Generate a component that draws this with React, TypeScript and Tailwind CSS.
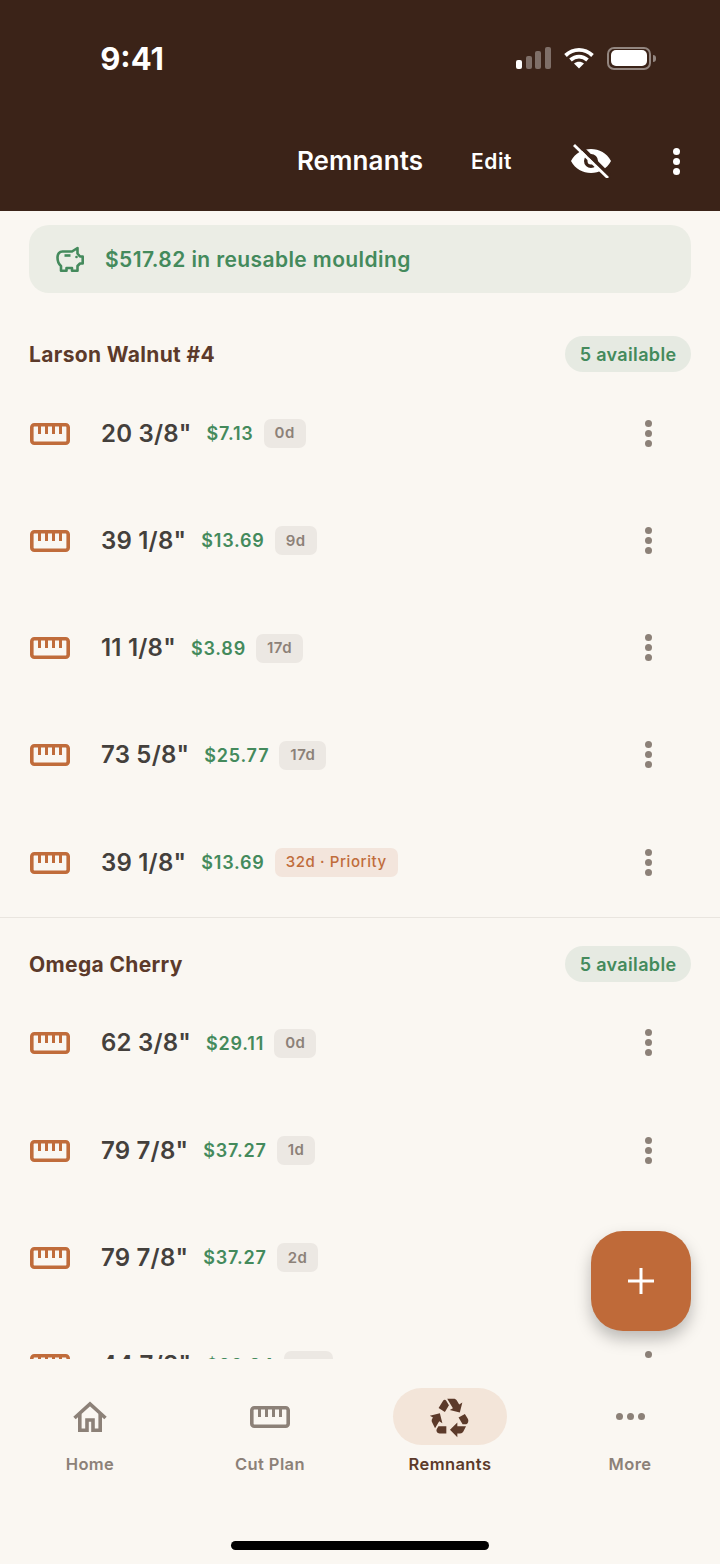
import { MdRecycling } from 'react-icons/md';

type Remnant = { size: string; price: string; age: string; priority?: boolean };

const GROUPS: { name: string; rows: Remnant[] }[] = [
  {
    name: 'Larson Walnut #4',
    rows: [
      { size: '20 3/8"', price: '$7.13', age: '0d' },
      { size: '39 1/8"', price: '$13.69', age: '9d' },
      { size: '11 1/8"', price: '$3.89', age: '17d' },
      { size: '73 5/8"', price: '$25.77', age: '17d' },
      { size: '39 1/8"', price: '$13.69', age: '32d · Priority', priority: true },
    ],
  },
  {
    name: 'Omega Cherry',
    rows: [
      { size: '62 3/8"', price: '$29.11', age: '0d' },
      { size: '79 7/8"', price: '$37.27', age: '1d' },
      { size: '79 7/8"', price: '$37.27', age: '2d' },
      { size: '44 7/8"', price: '$20.94', age: '12d' },
    ],
  },
];

function RulerIcon({ className }: { className?: string }) {
  return (
    <svg viewBox="0 0 40 22" className={className} fill="none" stroke="currentColor">
      <rect x="1.800" y="1.800" width="36.400" height="18.400" rx="2.500" strokeWidth="3.600" />
      <path d="M9.500 2v9M16.500 2v9M23.500 2v9M30.500 2v9" strokeWidth="3" />
    </svg>
  );
}

function HomeIcon({ className }: { className?: string }) {
  return (
    <svg viewBox="0 0 34 31" className={className} fill="none" stroke="currentColor" strokeWidth="3.600">
      <path d="M1.500 17 17 3l15.500 14" />
      <path d="M6.800 13v16.200h7.200V19h6v10.200h7.200V13" />
    </svg>
  );
}

function PiggyIcon({ className }: { className?: string }) {
  return (
    <svg viewBox="0 0 28 26" className={className} fill="none" stroke="currentColor" strokeWidth="2.600" strokeLinejoin="round">
      <path d="M6.500 5.500H16L21.500 2v5.500l2.500 3h2.700v7H24l-2.500 2.500v4.700h-5.500V22H10.500v2.700H5V20C2.500 18 1.500 15 1.500 11.500c0-3.500 2-6 5-6Z" />
      <path d="M8.500 9.500h6" />
      <circle cx="20.500" cy="11" r="1.300" fill="currentColor" stroke="none" />
    </svg>
  );
}

function EyeOffIcon() {
  return (
    <svg viewBox="0 0 40 34" className="h-[34px] w-[40px]">
      <path
        fillRule="evenodd"
        fill="#fff"
        d="M0 17C4 9 12 5 20 5s16 4 20 12c-4 8-12 12-20 12S4 25 0 17Zm20-7a7 7 0 1 0 0 14 7 7 0 0 0 0-14Z"
      />
      <circle cx="20" cy="17" r="3.500" fill="#fff" />
      <path d="M6 -1l34 34" stroke="#3b2318" strokeWidth="4" />
      <path d="M3 1l34 33" stroke="#fff" strokeWidth="2.800" />
    </svg>
  );
}

function StatusBar() {
  return (
    <div className="flex h-[116px] items-center">
      <div className="w-[264px] text-center text-[31px] font-bold leading-none text-white">9:41</div>
      <div className="ml-[252px] flex items-center">
        <div className="flex h-[22px] items-end gap-[3.500px]">
          <span className="h-[9px] w-[6px] rounded-[2px] bg-white" />
          <span className="h-[13px] w-[6px] rounded-[2px] bg-white/35" />
          <span className="h-[18px] w-[6px] rounded-[2px] bg-white/35" />
          <span className="h-[22px] w-[6px] rounded-[2px] bg-white/35" />
        </div>
        <svg viewBox="0 0 30 22" className="ml-[13px] h-[22px] w-[30px]" fill="none" stroke="#fff">
          <path d="M1.500 8.500c8-7.500 19-7.500 27 0" strokeWidth="3.800" />
          <path d="M6.500 13c5-4.500 12-4.500 17 0" strokeWidth="3.800" />
          <path d="M15 21.500 10 16.500c3-2.500 7-2.500 10 0Z" fill="#fff" stroke="none" />
        </svg>
        <div className="ml-[13px] flex items-center">
          <div className="flex h-[23px] w-[44px] items-center justify-center rounded-[7px] border-2 border-white/45">
            <div className="h-[16px] w-[36px] rounded-[5px] bg-white" />
          </div>
          <span className="ml-[2px] h-[7px] w-[3px] rounded-r-full bg-white/45" />
        </div>
      </div>
    </div>
  );
}

function Header() {
  return (
    <header className="h-[211px] shrink-0 bg-[#3b2318]">
      <StatusBar />
      <div className="grid grid-cols-[1fr_auto_1fr] items-center pt-[28px]">
        <div />
        <h1 className="text-[26px] font-semibold leading-[34px] tracking-[0.1px] text-white">Remnants</h1>
        <div className="flex items-center pl-[48px]">
          <span className="w-[100px] pt-[1px] text-[21px] font-semibold tracking-[0.5px] text-white">Edit</span>
          <EyeOffIcon />
          <div className="ml-[62px] flex flex-col gap-[3px]">
            <span className="h-[7px] w-[7px] rounded-full bg-white" />
            <span className="h-[7px] w-[7px] rounded-full bg-white" />
            <span className="h-[7px] w-[7px] rounded-full bg-white" />
          </div>
        </div>
      </div>
    </header>
  );
}

function Row({ row }: { row: Remnant }) {
  return (
    <div className="flex h-[107.25px] shrink-0 items-center pl-[30px] pr-[68px]">
      <RulerIcon className="h-[22px] w-[40px] text-[#c06c3b]" />
      <span className="ml-[31px] text-[24px] font-semibold tracking-[0.2px] text-[#44403c]">{row.size}</span>
      <span className="ml-[15px] text-[18px] font-semibold tracking-[0.8px] text-[#448a5c]">{row.price}</span>
      <span
        className={
          row.priority
            ? 'ml-[10px] flex h-[29px] items-center rounded-[7px] bg-[#f3e5dc] px-[11px] text-[15px] font-medium tracking-[0.6px] text-[#c06c3b]'
            : 'ml-[10px] flex h-[29px] items-center rounded-[7px] bg-[#ece8e3] px-[11px] text-[15px] font-semibold tracking-[0.5px] text-[#8c8178]'
        }
      >
        {row.age}
      </span>
      <div className="ml-auto -mt-[1px] flex flex-col gap-[3px]">
        <span className="h-[7px] w-[7px] rounded-full bg-[#8c8178]" />
        <span className="h-[7px] w-[7px] rounded-full bg-[#8c8178]" />
        <span className="h-[7px] w-[7px] rounded-full bg-[#8c8178]" />
      </div>
    </div>
  );
}

function Group({ name, rows, first }: { name: string; rows: Remnant[]; first: boolean }) {
  return (
    <section className={first ? 'border-b border-[#e9e5df] pb-[0.5px]' : ''}>
      <div className={first ? 'mt-[43px] flex h-[36px] items-center justify-between px-[29px]' : 'mt-[28.500px] flex h-[36px] items-center justify-between px-[29px]'}>
        <h2 className="pt-[1px] text-[21px] font-bold tracking-[0.35px] text-[#5c3a2a]">{name}</h2>
        <span className="flex h-[36px] items-center rounded-full bg-[#e6eae2] px-[14.500px] pt-[1px] text-[18px] font-semibold tracking-[0.35px] text-[#448a5c]">
          5 available
        </span>
      </div>
      <div className={first ? 'pt-[8px]' : 'pt-[7.500px]'}>
        {rows.map((r, i) => (
          <Row key={i} row={r} />
        ))}
      </div>
    </section>
  );
}

const NAV = [
  { label: 'Home', icon: <HomeIcon className="h-[31px] w-[34px]" /> },
  { label: 'Cut Plan', icon: <RulerIcon className="h-[22px] w-[40px]" /> },
  { label: 'Remnants', icon: <MdRecycling className="h-[44px] w-[44px]" />, active: true },
  {
    label: 'More',
    icon: (
      <div className="flex gap-[4px]">
        <span className="h-[7px] w-[7px] rounded-full bg-current" />
        <span className="h-[7px] w-[7px] rounded-full bg-current" />
        <span className="h-[7px] w-[7px] rounded-full bg-current" />
      </div>
    ),
  },
];

function BottomNav() {
  return (
    <nav className="flex h-[205px] shrink-0 flex-col bg-[#faf7f2]">
      <div className="grid grid-cols-4 pt-[29px]">
        {NAV.map((n) => (
          <div key={n.label} className={n.active ? 'flex flex-col items-center text-[#5c3a2a]' : 'flex flex-col items-center text-[#8c8178]'}>
            <div className={n.active ? 'flex h-[57px] w-[114px] items-center justify-center rounded-full bg-[#f3e5d9]' : 'flex h-[57px] w-[114px] items-center justify-center'}>
              {n.icon}
            </div>
            <span className="mt-[8px] text-[16.5px] font-semibold leading-[22px] tracking-[0.4px]">{n.label}</span>
          </div>
        ))}
      </div>
      <div className="mt-auto mb-[14px] h-[9px] w-[258px] self-center rounded-full bg-black" />
    </nav>
  );
}

export default function App() {
  return (
    <div className="relative flex h-[1564px] w-[720px] flex-col overflow-hidden bg-[#faf7f2] font-['Inter',sans-serif]">
      <Header />
      <main className="min-h-0 flex-1 overflow-hidden">
        <div className="mx-[29px] mt-[14px] flex h-[68px] items-center rounded-[20px] bg-[#ebede5] pl-[27px]">
          <PiggyIcon className="h-[26px] w-[28px] text-[#448a5c]" />
          <span className="ml-[21px] pt-[1px] text-[21px] font-semibold tracking-[0.4px] text-[#448a5c]">
            $517.82 in reusable moulding
          </span>
        </div>
        {GROUPS.map((g, i) => (
          <Group key={g.name} name={g.name} rows={g.rows} first={i === 0} />
        ))}
      </main>
      <BottomNav />
      <button className="absolute left-[591px] top-[1231px] flex h-[100px] w-[100px] items-center justify-center rounded-[32px] bg-[#bf6a39] shadow-[0_8px_16px_rgba(0,0,0,0.25)]">
        <svg viewBox="0 0 26 26" className="h-[26px] w-[26px]" stroke="#fff" strokeWidth="3">
          <path d="M13 0v26M0 13h26" />
        </svg>
      </button>
    </div>
  );
}
